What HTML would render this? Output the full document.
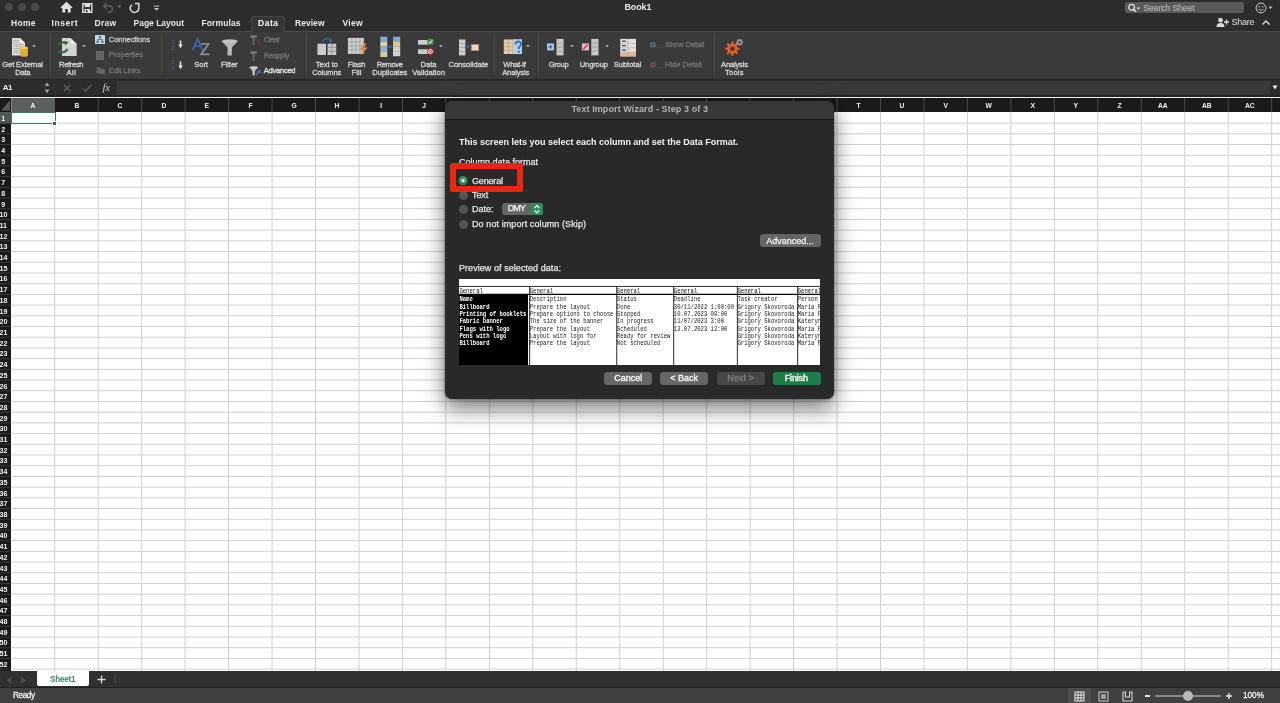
<!DOCTYPE html>
<html><head><meta charset="utf-8"><title>Book1</title>
<style>
html,body{margin:0;padding:0;background:#fff;}
body{width:1280px;height:703px;position:relative;overflow:hidden;font-family:"Liberation Sans",sans-serif;}
#root{position:absolute;left:0;top:0;width:1280px;height:703px;will-change:transform;}
.r{position:absolute;display:block;}
.t{position:absolute;white-space:pre;font-family:"Liberation Sans",sans-serif;}
.m{font-family:"Liberation Mono",monospace;}
</style></head><body><div id="root">
<div class="r" style="left:0px;top:0px;width:1280px;height:31px;background:#2c2c2c;"></div>
<div class="r" style="left:0px;top:31px;width:1280px;height:48px;background:#3a3a3a;"></div>
<div class="r" style="left:0px;top:31px;width:1280px;height:1px;background:#4a4a4a;"></div>
<div class="r" style="left:251px;top:16.2px;width:34px;height:15.8px;background:#363636;border-radius:3px 3px 0 0;border:1px solid #464646;border-bottom:none;box-sizing:border-box;"></div>
<div class="r" style="left:0px;top:79px;width:1280px;height:18px;background:#2c2c2c;"></div>
<div class="r" style="left:0px;top:78.5px;width:1280px;height:1.5px;background:#252525;"></div>
<div class="r" style="left:0px;top:95px;width:1280px;height:2px;background:#242424;"></div>
<div class="r" style="left:117px;top:80.5px;width:1153.4px;height:14.3px;background:#393939;"></div>
<div class="r" style="left:0px;top:96.8px;width:1280px;height:1.3px;background:#f0f0f0;"></div>
<div class="r" style="left:0px;top:98px;width:1280px;height:14px;background:#1a1a1a;"></div>
<div class="r" style="left:0px;top:112px;width:1280px;height:559px;background:#ffffff;"></div>
<div class="r" style="left:0px;top:671px;width:1280px;height:17px;background:#303030;"></div>
<div class="r" style="left:0px;top:688.3px;width:1280px;height:15px;background:#404040;"></div>
<div class="r" style="left:0px;top:686.6px;width:1280px;height:1.7px;background:#202020;"></div>
<div class="r" style="left:4.6px;top:3.0px;width:8.2px;height:8.2px;background:#494949;border-radius:50%"></div>
<div class="r" style="left:18.1px;top:3.0px;width:8.2px;height:8.2px;background:#494949;border-radius:50%"></div>
<div class="r" style="left:31.299999999999997px;top:3.0px;width:8.2px;height:8.2px;background:#494949;border-radius:50%"></div>
<div class="t" style="left:624.50px;top:2.00px;font-size:9px;line-height:11px;font-weight:700;color:#e8e8e8;letter-spacing:-0.127px;">Book1</div>
<svg class="r" style="left:60px;top:1px" width="13" height="13" viewBox="0 0 13 13"><path d="M6.5 1.4 L12 6.6 H10.6 V11.6 H7.8 V8 H5.2 V11.6 H2.4 V6.6 H1Z" fill="#e4e4e4"/><path d="M0.9 6.9 L6.5 1.6 L12.1 6.9" fill="none" stroke="#e4e4e4" stroke-width="1.3"/></svg>
<svg class="r" style="left:82px;top:2.5px" width="11" height="10" viewBox="0 0 11 10"><path d="M0.8 0.8 H9.8 V9.2 H0.8Z" fill="none" stroke="#dedede" stroke-width="1.4"/><rect x="2.6" y="0.8" width="5.4" height="3.3" fill="#dedede"/><rect x="2.6" y="6" width="5.4" height="3.2" fill="#dedede"/><rect x="4" y="7" width="1.4" height="2.2" fill="#2c2c2c"/></svg>
<svg class="r" style="left:102px;top:1px" width="12" height="12" viewBox="0 0 12 12"><path d="M4.5 2 L1.5 5 L4.5 8 M1.5 5 H7.5 A3 3 0 0 1 7.5 11 H5.5" fill="none" stroke="#5e5e5e" stroke-width="1.3"/></svg>
<svg class="r" style="left:117.3px;top:5.3px" width="5" height="3.5" viewBox="0 0 5 3.5"><path d="M0.4 0.4 H4.6 L2.5 3Z" fill="#6e6e6e"/></svg>
<svg class="r" style="left:129px;top:1px" width="13" height="13" viewBox="0 0 13 13"><path d="M2.9 3.9 A4.2 4.2 0 1 0 9.64 6.47" fill="none" stroke="#dadada" stroke-width="1.5"/><path d="M5.9 2.4 H9.8 V6.6" fill="none" stroke="#dadada" stroke-width="1.5"/></svg>
<svg class="r" style="left:152.5px;top:4.5px" width="7" height="7" viewBox="0 0 7 7"><rect x="0.8" y="0.6" width="5.4" height="1.1" fill="#b8b8b8"/><path d="M0.8 3 H6.2 L3.5 6Z" fill="#b8b8b8"/></svg>
<div class="r" style="left:1125px;top:1.6px;width:119px;height:11.8px;background:#595959;border-radius:2px"></div>
<svg class="r" style="left:1127px;top:2.6px" width="14" height="10" viewBox="0 0 14 10"><circle cx="4.6" cy="4.3" r="2.9" fill="none" stroke="#e0e0e0" stroke-width="1.3"/><path d="M6.7 6.4 L9 8.8" stroke="#e0e0e0" stroke-width="1.5"/><path d="M9.5 4.5 H13 L11.2 6.7Z" fill="#e0e0e0"/></svg>
<div class="t" style="left:1143.50px;top:2.95px;font-size:8.5px;line-height:10.5px;font-weight:400;color:#ababab;letter-spacing:-0.046px;-webkit-text-stroke:0.25px currentColor;">Search Sheet</div>
<svg class="r" style="left:1255px;top:2px" width="12" height="12" viewBox="0 0 12 12"><circle cx="6" cy="6" r="4.9" fill="none" stroke="#cfcfcf" stroke-width="1"/><circle cx="4.3" cy="4.7" r="0.7" fill="#cfcfcf"/><circle cx="7.7" cy="4.7" r="0.7" fill="#cfcfcf"/><path d="M3.6 7.2 Q6 9.6 8.4 7.2" fill="none" stroke="#cfcfcf" stroke-width="0.9"/></svg>
<svg class="r" style="left:1268px;top:6px" width="6" height="4" viewBox="0 0 6 4"><path d="M0.5 0.5 H4.5 L2.5 3Z" fill="#bbb"/></svg>
<svg class="r" style="left:1216px;top:17px" width="14" height="11" viewBox="0 0 14 11"><circle cx="4.5" cy="3.2" r="2.4" fill="#d8d8d8"/><path d="M0.5 10 Q0.5 6 4.5 6 Q8.5 6 8.5 10Z" fill="#d8d8d8"/><path d="M10.5 2.5 V7.5 M8 5 H13" stroke="#d8d8d8" stroke-width="1.3"/></svg>
<div class="t" style="left:1231.50px;top:16.50px;font-size:9px;line-height:11px;font-weight:400;color:#e0e0e0;letter-spacing:-0.254px;">Share</div>
<svg class="r" style="left:1261px;top:19px" width="10" height="7" viewBox="0 0 10 7"><path d="M1.5 5.5 L5 2 L8.5 5.5" fill="none" stroke="#d0d0d0" stroke-width="1.5"/></svg>
<div class="t" style="left:11.00px;top:18.05px;font-size:8.5px;line-height:10.5px;font-weight:700;color:#e8e8e8;letter-spacing:0.295px;">Home</div>
<div class="t" style="left:51.50px;top:18.05px;font-size:8.5px;line-height:10.5px;font-weight:700;color:#e8e8e8;letter-spacing:0.571px;">Insert</div>
<div class="t" style="left:94.50px;top:18.05px;font-size:8.5px;line-height:10.5px;font-weight:700;color:#e8e8e8;letter-spacing:0.238px;">Draw</div>
<div class="t" style="left:133.50px;top:18.05px;font-size:8.5px;line-height:10.5px;font-weight:700;color:#e8e8e8;letter-spacing:-0.004px;">Page Layout</div>
<div class="t" style="left:201.50px;top:18.05px;font-size:8.5px;line-height:10.5px;font-weight:700;color:#e8e8e8;letter-spacing:0.106px;">Formulas</div>
<div class="t" style="left:258.00px;top:18.05px;font-size:8.5px;line-height:10.5px;font-weight:700;color:#ffffff;letter-spacing:0.525px;">Data</div>
<div class="t" style="left:295.00px;top:18.05px;font-size:8.5px;line-height:10.5px;font-weight:700;color:#e8e8e8;letter-spacing:0.041px;">Review</div>
<div class="t" style="left:342.50px;top:18.05px;font-size:8.5px;line-height:10.5px;font-weight:700;color:#e8e8e8;letter-spacing:0.261px;">View</div>
<div class="r" style="left:50px;top:35px;width:1px;height:40px;background:#4d4d4d;"></div>
<div class="r" style="left:161px;top:35px;width:1px;height:40px;background:#4d4d4d;"></div>
<div class="r" style="left:305.5px;top:35px;width:1px;height:40px;background:#4d4d4d;"></div>
<div class="r" style="left:494px;top:35px;width:1px;height:40px;background:#4d4d4d;"></div>
<div class="r" style="left:537.5px;top:35px;width:1px;height:40px;background:#4d4d4d;"></div>
<div class="r" style="left:714px;top:35px;width:1px;height:40px;background:#4d4d4d;"></div>
<div class="t" style="left:2.30px;top:59.50px;font-size:7.6px;line-height:9.6px;font-weight:400;color:#d4d4d4;letter-spacing:-0.140px;-webkit-text-stroke:0.3px currentColor;">Get External</div>
<div class="t" style="left:15.20px;top:67.60px;font-size:7.6px;line-height:9.6px;font-weight:400;color:#d4d4d4;letter-spacing:-0.218px;-webkit-text-stroke:0.3px currentColor;">Data</div>
<div class="t" style="left:59.00px;top:59.50px;font-size:7.6px;line-height:9.6px;font-weight:400;color:#d4d4d4;letter-spacing:-0.335px;-webkit-text-stroke:0.3px currentColor;">Refresh</div>
<div class="t" style="left:66.50px;top:67.60px;font-size:7.6px;line-height:9.6px;font-weight:400;color:#d4d4d4;letter-spacing:0.527px;-webkit-text-stroke:0.3px currentColor;">All</div>
<div class="t" style="left:194.30px;top:59.50px;font-size:7.6px;line-height:9.6px;font-weight:400;color:#d4d4d4;letter-spacing:-0.080px;-webkit-text-stroke:0.3px currentColor;">Sort</div>
<div class="t" style="left:221.00px;top:59.50px;font-size:7.6px;line-height:9.6px;font-weight:400;color:#d4d4d4;letter-spacing:-0.058px;-webkit-text-stroke:0.3px currentColor;">Filter</div>
<div class="t" style="left:315.80px;top:59.50px;font-size:7.6px;line-height:9.6px;font-weight:400;color:#d4d4d4;letter-spacing:-0.031px;-webkit-text-stroke:0.3px currentColor;">Text to</div>
<div class="t" style="left:312.20px;top:67.60px;font-size:7.6px;line-height:9.6px;font-weight:400;color:#d4d4d4;letter-spacing:-0.148px;-webkit-text-stroke:0.3px currentColor;">Columns</div>
<div class="t" style="left:347.80px;top:59.50px;font-size:7.6px;line-height:9.6px;font-weight:400;color:#d4d4d4;letter-spacing:-0.196px;-webkit-text-stroke:0.3px currentColor;">Flash</div>
<div class="t" style="left:351.50px;top:67.60px;font-size:7.6px;line-height:9.6px;font-weight:400;color:#d4d4d4;letter-spacing:0.097px;-webkit-text-stroke:0.3px currentColor;">Fill</div>
<div class="t" style="left:376.70px;top:59.50px;font-size:7.6px;line-height:9.6px;font-weight:400;color:#d4d4d4;letter-spacing:-0.400px;-webkit-text-stroke:0.3px currentColor;">Remove</div>
<div class="t" style="left:372.30px;top:67.60px;font-size:7.6px;line-height:9.6px;font-weight:400;color:#d4d4d4;letter-spacing:-0.043px;-webkit-text-stroke:0.3px currentColor;">Duplicates</div>
<div class="t" style="left:420.50px;top:59.50px;font-size:7.6px;line-height:9.6px;font-weight:400;color:#d4d4d4;letter-spacing:-0.018px;-webkit-text-stroke:0.3px currentColor;">Data</div>
<div class="t" style="left:412.30px;top:67.60px;font-size:7.6px;line-height:9.6px;font-weight:400;color:#d4d4d4;letter-spacing:-0.013px;-webkit-text-stroke:0.3px currentColor;">Validation</div>
<div class="t" style="left:448.50px;top:59.50px;font-size:7.6px;line-height:9.6px;font-weight:400;color:#d4d4d4;letter-spacing:-0.044px;-webkit-text-stroke:0.3px currentColor;">Consolidate</div>
<div class="t" style="left:503.30px;top:59.50px;font-size:7.6px;line-height:9.6px;font-weight:400;color:#d4d4d4;letter-spacing:-0.299px;-webkit-text-stroke:0.3px currentColor;">What-If</div>
<div class="t" style="left:502.20px;top:67.60px;font-size:7.6px;line-height:9.6px;font-weight:400;color:#d4d4d4;letter-spacing:-0.172px;-webkit-text-stroke:0.3px currentColor;">Analysis</div>
<div class="t" style="left:548.70px;top:59.50px;font-size:7.6px;line-height:9.6px;font-weight:400;color:#d4d4d4;letter-spacing:-0.281px;-webkit-text-stroke:0.3px currentColor;">Group</div>
<div class="t" style="left:579.80px;top:59.50px;font-size:7.6px;line-height:9.6px;font-weight:400;color:#d4d4d4;letter-spacing:-0.159px;-webkit-text-stroke:0.3px currentColor;">Ungroup</div>
<div class="t" style="left:613.70px;top:59.50px;font-size:7.6px;line-height:9.6px;font-weight:400;color:#d4d4d4;letter-spacing:-0.041px;-webkit-text-stroke:0.3px currentColor;">Subtotal</div>
<div class="t" style="left:721.00px;top:59.50px;font-size:7.6px;line-height:9.6px;font-weight:400;color:#d4d4d4;letter-spacing:-0.186px;-webkit-text-stroke:0.3px currentColor;">Analysis</div>
<div class="t" style="left:725.00px;top:67.60px;font-size:7.6px;line-height:9.6px;font-weight:400;color:#d4d4d4;letter-spacing:0.189px;-webkit-text-stroke:0.3px currentColor;">Tools</div>
<div class="t" style="left:108.80px;top:34.80px;font-size:7.6px;line-height:9.6px;font-weight:400;color:#c9c9c9;letter-spacing:-0.105px;-webkit-text-stroke:0.3px currentColor;">Connections</div>
<div class="t" style="left:108.80px;top:50.40px;font-size:7.6px;line-height:9.6px;font-weight:400;color:#737373;letter-spacing:-0.049px;-webkit-text-stroke:0.3px currentColor;">Properties</div>
<div class="t" style="left:108.80px;top:65.60px;font-size:7.6px;line-height:9.6px;font-weight:400;color:#737373;letter-spacing:-0.139px;-webkit-text-stroke:0.3px currentColor;">Edit Links</div>
<div class="t" style="left:263.80px;top:35.00px;font-size:7.6px;line-height:9.6px;font-weight:400;color:#737373;letter-spacing:-0.491px;-webkit-text-stroke:0.3px currentColor;">Clear</div>
<div class="t" style="left:263.80px;top:50.50px;font-size:7.6px;line-height:9.6px;font-weight:400;color:#737373;letter-spacing:-0.397px;-webkit-text-stroke:0.3px currentColor;">Reapply</div>
<div class="t" style="left:263.80px;top:65.70px;font-size:7.6px;line-height:9.6px;font-weight:400;color:#e4e4e4;letter-spacing:-0.286px;-webkit-text-stroke:0.3px currentColor;">Advanced</div>
<div class="t" style="left:665.00px;top:40.40px;font-size:7.6px;line-height:9.6px;font-weight:400;color:#737373;letter-spacing:-0.115px;-webkit-text-stroke:0.3px currentColor;">Show Detail</div>
<div class="t" style="left:665.00px;top:60.20px;font-size:7.6px;line-height:9.6px;font-weight:400;color:#737373;letter-spacing:-0.037px;-webkit-text-stroke:0.3px currentColor;">Hide Detail</div>
<svg class="r" style="left:32px;top:44.900000000000006px" width="4" height="2.6" viewBox="0 0 4 2.6"><path d="M0.2 0.2 H3.8 L2 2.4Z" fill="#c0c0c0"/></svg>
<svg class="r" style="left:82px;top:44.900000000000006px" width="4" height="2.6" viewBox="0 0 4 2.6"><path d="M0.2 0.2 H3.8 L2 2.4Z" fill="#c0c0c0"/></svg>
<svg class="r" style="left:439.4px;top:44.900000000000006px" width="4" height="2.6" viewBox="0 0 4 2.6"><path d="M0.2 0.2 H3.8 L2 2.4Z" fill="#c0c0c0"/></svg>
<svg class="r" style="left:525.9px;top:44.900000000000006px" width="4" height="2.6" viewBox="0 0 4 2.6"><path d="M0.2 0.2 H3.8 L2 2.4Z" fill="#c0c0c0"/></svg>
<svg class="r" style="left:569.6px;top:44.900000000000006px" width="4" height="2.6" viewBox="0 0 4 2.6"><path d="M0.2 0.2 H3.8 L2 2.4Z" fill="#c0c0c0"/></svg>
<svg class="r" style="left:604.6px;top:44.900000000000006px" width="4" height="2.6" viewBox="0 0 4 2.6"><path d="M0.2 0.2 H3.8 L2 2.4Z" fill="#c0c0c0"/></svg>
<div class="t" style="left:2.80px;top:83.00px;font-size:8px;line-height:10px;font-weight:700;color:#f0f0f0;letter-spacing:-0.627px;">A1</div>
<svg class="r" style="left:44px;top:81px" width="6" height="14" viewBox="0 0 6 14"><path d="M0.6 5 L3 1.2 L5.4 5Z M0.6 8.6 L3 12.4 L5.4 8.6Z" fill="#9c9c9c"/></svg>
<div class="r" style="left:54px;top:80px;width:1px;height:16px;background:#363636;"></div>
<svg class="r" style="left:63px;top:84.3px" width="8" height="8" viewBox="0 0 8 8"><path d="M1 1 L7 7 M7 1 L1 7" stroke="#585858" stroke-width="1.7" fill="none"/></svg>
<svg class="r" style="left:81.5px;top:84.3px" width="10" height="8" viewBox="0 0 10 8"><path d="M1 4.5 L3.8 7 L9 1" stroke="#585858" stroke-width="1.6" fill="none"/></svg>
<div class="t" style="left:102.5px;top:81px;font-family:'Liberation Serif',serif;font-style:italic;font-size:11px;line-height:13px;color:#c4c4c4;letter-spacing:-0.3px">fx</div>
<svg class="r" style="left:1272px;top:85.3px" width="6" height="5" viewBox="0 0 6 5"><path d="M0.4 0.5 H5.6 L3 4.6Z" fill="#e8e8e8"/></svg>
<div class="r" style="left:11px;top:98px;width:44px;height:14px;background:#5b605d;"></div>
<svg class="r" style="left:0px;top:98px" width="11" height="14" viewBox="0 0 11 14"><path d="M10 2.5 V12.5 H1Z" fill="#5a5a5a"/></svg>
<div class="r" style="left:11px;top:98px;width:1px;height:14px;background:#8c8c8c;"></div>
<svg class="r" style="left:0px;top:0px" width="1280" height="120" viewBox="0 0 1280 120"><path d="M98.22 98V112M141.68 98V112M185.14 98V112M228.60 98V112M272.06 98V112M315.52 98V112M358.98 98V112M402.44 98V112M445.90 98V112M489.36 98V112M532.82 98V112M576.28 98V112M619.74 98V112M663.20 98V112M706.66 98V112M750.12 98V112M793.58 98V112M837.04 98V112M880.50 98V112M923.96 98V112M967.42 98V112M1010.88 98V112M1054.34 98V112M1097.80 98V112M1141.26 98V112M1184.72 98V112M1228.18 98V112M1271.64 98V112" stroke="#4a4a4a" stroke-width="1" fill="none"/></svg>
<div class="t" style="left:30.14px;top:100.90px;font-size:8px;line-height:10px;font-weight:700;color:#f4f4f4;letter-spacing:0.000px;transform:scaleX(0.84);transform-origin:50% 50%;">A</div>
<div class="t" style="left:73.60px;top:100.90px;font-size:8px;line-height:10px;font-weight:700;color:#f4f4f4;letter-spacing:0.000px;transform:scaleX(0.84);transform-origin:50% 50%;">B</div>
<div class="t" style="left:117.06px;top:100.90px;font-size:8px;line-height:10px;font-weight:700;color:#f4f4f4;letter-spacing:0.000px;transform:scaleX(0.84);transform-origin:50% 50%;">C</div>
<div class="t" style="left:160.52px;top:100.90px;font-size:8px;line-height:10px;font-weight:700;color:#f4f4f4;letter-spacing:-0.000px;transform:scaleX(0.84);transform-origin:50% 50%;">D</div>
<div class="t" style="left:204.20px;top:100.90px;font-size:8px;line-height:10px;font-weight:700;color:#f4f4f4;letter-spacing:0.000px;transform:scaleX(0.84);transform-origin:50% 50%;">E</div>
<div class="t" style="left:247.89px;top:100.90px;font-size:8px;line-height:10px;font-weight:700;color:#f4f4f4;letter-spacing:-0.000px;transform:scaleX(0.84);transform-origin:50% 50%;">F</div>
<div class="t" style="left:290.68px;top:100.90px;font-size:8px;line-height:10px;font-weight:700;color:#f4f4f4;letter-spacing:-0.000px;transform:scaleX(0.84);transform-origin:50% 50%;">G</div>
<div class="t" style="left:334.36px;top:100.90px;font-size:8px;line-height:10px;font-weight:700;color:#f4f4f4;letter-spacing:0.000px;transform:scaleX(0.84);transform-origin:50% 50%;">H</div>
<div class="t" style="left:379.60px;top:100.90px;font-size:8px;line-height:10px;font-weight:700;color:#f4f4f4;letter-spacing:-0.000px;transform:scaleX(0.84);transform-origin:50% 50%;">I</div>
<div class="t" style="left:421.95px;top:100.90px;font-size:8px;line-height:10px;font-weight:700;color:#f4f4f4;letter-spacing:0.000px;transform:scaleX(0.84);transform-origin:50% 50%;">J</div>
<div class="t" style="left:464.74px;top:100.90px;font-size:8px;line-height:10px;font-weight:700;color:#f4f4f4;letter-spacing:0.000px;transform:scaleX(0.84);transform-origin:50% 50%;">K</div>
<div class="t" style="left:508.65px;top:100.90px;font-size:8px;line-height:10px;font-weight:700;color:#f4f4f4;letter-spacing:-0.000px;transform:scaleX(0.84);transform-origin:50% 50%;">L</div>
<div class="t" style="left:551.22px;top:100.90px;font-size:8px;line-height:10px;font-weight:700;color:#f4f4f4;letter-spacing:0.000px;transform:scaleX(0.84);transform-origin:50% 50%;">M</div>
<div class="t" style="left:595.12px;top:100.90px;font-size:8px;line-height:10px;font-weight:700;color:#f4f4f4;letter-spacing:-0.000px;transform:scaleX(0.84);transform-origin:50% 50%;">N</div>
<div class="t" style="left:638.36px;top:100.90px;font-size:8px;line-height:10px;font-weight:700;color:#f4f4f4;letter-spacing:0.000px;transform:scaleX(0.84);transform-origin:50% 50%;">O</div>
<div class="t" style="left:682.26px;top:100.90px;font-size:8px;line-height:10px;font-weight:700;color:#f4f4f4;letter-spacing:0.000px;transform:scaleX(0.84);transform-origin:50% 50%;">P</div>
<div class="t" style="left:725.28px;top:100.90px;font-size:8px;line-height:10px;font-weight:700;color:#f4f4f4;letter-spacing:0.000px;transform:scaleX(0.84);transform-origin:50% 50%;">Q</div>
<div class="t" style="left:768.96px;top:100.90px;font-size:8px;line-height:10px;font-weight:700;color:#f4f4f4;letter-spacing:-0.000px;transform:scaleX(0.84);transform-origin:50% 50%;">R</div>
<div class="t" style="left:812.64px;top:100.90px;font-size:8px;line-height:10px;font-weight:700;color:#f4f4f4;letter-spacing:0.000px;transform:scaleX(0.84);transform-origin:50% 50%;">S</div>
<div class="t" style="left:856.33px;top:100.90px;font-size:8px;line-height:10px;font-weight:700;color:#f4f4f4;letter-spacing:-0.000px;transform:scaleX(0.84);transform-origin:50% 50%;">T</div>
<div class="t" style="left:899.34px;top:100.90px;font-size:8px;line-height:10px;font-weight:700;color:#f4f4f4;letter-spacing:-0.000px;transform:scaleX(0.84);transform-origin:50% 50%;">U</div>
<div class="t" style="left:943.02px;top:100.90px;font-size:8px;line-height:10px;font-weight:700;color:#f4f4f4;letter-spacing:0.000px;transform:scaleX(0.84);transform-origin:50% 50%;">V</div>
<div class="t" style="left:985.37px;top:100.90px;font-size:8px;line-height:10px;font-weight:700;color:#f4f4f4;letter-spacing:0.000px;transform:scaleX(0.84);transform-origin:50% 50%;">W</div>
<div class="t" style="left:1029.94px;top:100.90px;font-size:8px;line-height:10px;font-weight:700;color:#f4f4f4;letter-spacing:-0.000px;transform:scaleX(0.84);transform-origin:50% 50%;">X</div>
<div class="t" style="left:1073.40px;top:100.90px;font-size:8px;line-height:10px;font-weight:700;color:#f4f4f4;letter-spacing:-0.000px;transform:scaleX(0.84);transform-origin:50% 50%;">Y</div>
<div class="t" style="left:1117.09px;top:100.90px;font-size:8px;line-height:10px;font-weight:700;color:#f4f4f4;letter-spacing:0.000px;transform:scaleX(0.84);transform-origin:50% 50%;">Z</div>
<div class="t" style="left:1157.21px;top:100.90px;font-size:8px;line-height:10px;font-weight:700;color:#f4f4f4;letter-spacing:-0.000px;transform:scaleX(0.84);transform-origin:50% 50%;">AA</div>
<div class="t" style="left:1200.67px;top:100.90px;font-size:8px;line-height:10px;font-weight:700;color:#f4f4f4;letter-spacing:-0.000px;transform:scaleX(0.84);transform-origin:50% 50%;">AB</div>
<div class="t" style="left:1244.13px;top:100.90px;font-size:8px;line-height:10px;font-weight:700;color:#f4f4f4;letter-spacing:-0.000px;transform:scaleX(0.84);transform-origin:50% 50%;">AC</div>
<svg class="r" style="left:0px;top:0px" width="1280" height="671" viewBox="0 0 1280 671"><path d="M11 123.11H1280M11 133.81H1280M11 144.52H1280M11 155.22H1280M11 165.93H1280M11 176.64H1280M11 187.34H1280M11 198.05H1280M11 208.75H1280M11 219.46H1280M11 230.17H1280M11 240.87H1280M11 251.58H1280M11 262.28H1280M11 272.99H1280M11 283.70H1280M11 294.40H1280M11 305.11H1280M11 315.81H1280M11 326.52H1280M11 337.23H1280M11 347.93H1280M11 358.64H1280M11 369.34H1280M11 380.05H1280M11 390.76H1280M11 401.46H1280M11 412.17H1280M11 422.87H1280M11 433.58H1280M11 444.29H1280M11 454.99H1280M11 465.70H1280M11 476.40H1280M11 487.11H1280M11 497.82H1280M11 508.52H1280M11 519.23H1280M11 529.93H1280M11 540.64H1280M11 551.35H1280M11 562.05H1280M11 572.76H1280M11 583.46H1280M11 594.17H1280M11 604.88H1280M11 615.58H1280M11 626.29H1280M11 636.99H1280M11 647.70H1280M11 658.41H1280M11 669.11H1280M54.76 112V671M98.22 112V671M141.68 112V671M185.14 112V671M228.60 112V671M272.06 112V671M315.52 112V671M358.98 112V671M402.44 112V671M445.90 112V671M489.36 112V671M532.82 112V671M576.28 112V671M619.74 112V671M663.20 112V671M706.66 112V671M750.12 112V671M793.58 112V671M837.04 112V671M880.50 112V671M923.96 112V671M967.42 112V671M1010.88 112V671M1054.34 112V671M1097.80 112V671M1141.26 112V671M1184.72 112V671M1228.18 112V671M1271.64 112V671" stroke="#d1d1d1" stroke-width="1" fill="none"/></svg>
<div class="r" style="left:0px;top:112px;width:11px;height:559px;background:#1a1a1a;"></div>
<div class="r" style="left:0px;top:112px;width:11px;height:11.5px;background:#505a55;"></div>
<svg class="r" style="left:0px;top:0px" width="12" height="671" viewBox="0 0 12 671"><path d="M0 123.11H11M0 133.81H11M0 144.52H11M0 155.22H11M0 165.93H11M0 176.64H11M0 187.34H11M0 198.05H11M0 208.75H11M0 219.46H11M0 230.17H11M0 240.87H11M0 251.58H11M0 262.28H11M0 272.99H11M0 283.70H11M0 294.40H11M0 305.11H11M0 315.81H11M0 326.52H11M0 337.23H11M0 347.93H11M0 358.64H11M0 369.34H11M0 380.05H11M0 390.76H11M0 401.46H11M0 412.17H11M0 422.87H11M0 433.58H11M0 444.29H11M0 454.99H11M0 465.70H11M0 476.40H11M0 487.11H11M0 497.82H11M0 508.52H11M0 519.23H11M0 529.93H11M0 540.64H11M0 551.35H11M0 562.05H11M0 572.76H11M0 583.46H11M0 594.17H11M0 604.88H11M0 615.58H11M0 626.29H11M0 636.99H11M0 647.70H11M0 658.41H11M0 669.11H11" stroke="#3a3a3a" stroke-width="1" fill="none"/></svg>
<div class="r" style="left:0;top:112px;width:11px;height:559px;overflow:hidden">
<div class="t" style="left:1.30px;top:1.85px;font-size:7.9px;line-height:9px;font-weight:700;color:#f4f4f4;transform:scaleX(0.9);transform-origin:50% 50%">1</div>
<div class="t" style="left:1.30px;top:12.56px;font-size:7.9px;line-height:9px;font-weight:700;color:#f4f4f4;transform:scaleX(0.9);transform-origin:50% 50%">2</div>
<div class="t" style="left:1.30px;top:23.27px;font-size:7.9px;line-height:9px;font-weight:700;color:#f4f4f4;transform:scaleX(0.9);transform-origin:50% 50%">3</div>
<div class="t" style="left:1.30px;top:33.97px;font-size:7.9px;line-height:9px;font-weight:700;color:#f4f4f4;transform:scaleX(0.9);transform-origin:50% 50%">4</div>
<div class="t" style="left:1.30px;top:44.68px;font-size:7.9px;line-height:9px;font-weight:700;color:#f4f4f4;transform:scaleX(0.9);transform-origin:50% 50%">5</div>
<div class="t" style="left:1.30px;top:55.38px;font-size:7.9px;line-height:9px;font-weight:700;color:#f4f4f4;transform:scaleX(0.9);transform-origin:50% 50%">6</div>
<div class="t" style="left:1.30px;top:66.09px;font-size:7.9px;line-height:9px;font-weight:700;color:#f4f4f4;transform:scaleX(0.9);transform-origin:50% 50%">7</div>
<div class="t" style="left:1.30px;top:76.79px;font-size:7.9px;line-height:9px;font-weight:700;color:#f4f4f4;transform:scaleX(0.9);transform-origin:50% 50%">8</div>
<div class="t" style="left:1.30px;top:87.50px;font-size:7.9px;line-height:9px;font-weight:700;color:#f4f4f4;transform:scaleX(0.9);transform-origin:50% 50%">9</div>
<div class="t" style="left:-0.89px;top:98.21px;font-size:7.9px;line-height:9px;font-weight:700;color:#f4f4f4;transform:scaleX(0.9);transform-origin:50% 50%">10</div>
<div class="t" style="left:-0.68px;top:108.91px;font-size:7.9px;line-height:9px;font-weight:700;color:#f4f4f4;transform:scaleX(0.9);transform-origin:50% 50%">11</div>
<div class="t" style="left:-0.89px;top:119.62px;font-size:7.9px;line-height:9px;font-weight:700;color:#f4f4f4;transform:scaleX(0.9);transform-origin:50% 50%">12</div>
<div class="t" style="left:-0.89px;top:130.32px;font-size:7.9px;line-height:9px;font-weight:700;color:#f4f4f4;transform:scaleX(0.9);transform-origin:50% 50%">13</div>
<div class="t" style="left:-0.89px;top:141.03px;font-size:7.9px;line-height:9px;font-weight:700;color:#f4f4f4;transform:scaleX(0.9);transform-origin:50% 50%">14</div>
<div class="t" style="left:-0.89px;top:151.74px;font-size:7.9px;line-height:9px;font-weight:700;color:#f4f4f4;transform:scaleX(0.9);transform-origin:50% 50%">15</div>
<div class="t" style="left:-0.89px;top:162.44px;font-size:7.9px;line-height:9px;font-weight:700;color:#f4f4f4;transform:scaleX(0.9);transform-origin:50% 50%">16</div>
<div class="t" style="left:-0.89px;top:173.15px;font-size:7.9px;line-height:9px;font-weight:700;color:#f4f4f4;transform:scaleX(0.9);transform-origin:50% 50%">17</div>
<div class="t" style="left:-0.89px;top:183.85px;font-size:7.9px;line-height:9px;font-weight:700;color:#f4f4f4;transform:scaleX(0.9);transform-origin:50% 50%">18</div>
<div class="t" style="left:-0.89px;top:194.56px;font-size:7.9px;line-height:9px;font-weight:700;color:#f4f4f4;transform:scaleX(0.9);transform-origin:50% 50%">19</div>
<div class="t" style="left:-0.89px;top:205.27px;font-size:7.9px;line-height:9px;font-weight:700;color:#f4f4f4;transform:scaleX(0.9);transform-origin:50% 50%">20</div>
<div class="t" style="left:-0.89px;top:215.97px;font-size:7.9px;line-height:9px;font-weight:700;color:#f4f4f4;transform:scaleX(0.9);transform-origin:50% 50%">21</div>
<div class="t" style="left:-0.89px;top:226.68px;font-size:7.9px;line-height:9px;font-weight:700;color:#f4f4f4;transform:scaleX(0.9);transform-origin:50% 50%">22</div>
<div class="t" style="left:-0.89px;top:237.38px;font-size:7.9px;line-height:9px;font-weight:700;color:#f4f4f4;transform:scaleX(0.9);transform-origin:50% 50%">23</div>
<div class="t" style="left:-0.89px;top:248.09px;font-size:7.9px;line-height:9px;font-weight:700;color:#f4f4f4;transform:scaleX(0.9);transform-origin:50% 50%">24</div>
<div class="t" style="left:-0.89px;top:258.80px;font-size:7.9px;line-height:9px;font-weight:700;color:#f4f4f4;transform:scaleX(0.9);transform-origin:50% 50%">25</div>
<div class="t" style="left:-0.89px;top:269.50px;font-size:7.9px;line-height:9px;font-weight:700;color:#f4f4f4;transform:scaleX(0.9);transform-origin:50% 50%">26</div>
<div class="t" style="left:-0.89px;top:280.21px;font-size:7.9px;line-height:9px;font-weight:700;color:#f4f4f4;transform:scaleX(0.9);transform-origin:50% 50%">27</div>
<div class="t" style="left:-0.89px;top:290.91px;font-size:7.9px;line-height:9px;font-weight:700;color:#f4f4f4;transform:scaleX(0.9);transform-origin:50% 50%">28</div>
<div class="t" style="left:-0.89px;top:301.62px;font-size:7.9px;line-height:9px;font-weight:700;color:#f4f4f4;transform:scaleX(0.9);transform-origin:50% 50%">29</div>
<div class="t" style="left:-0.89px;top:312.33px;font-size:7.9px;line-height:9px;font-weight:700;color:#f4f4f4;transform:scaleX(0.9);transform-origin:50% 50%">30</div>
<div class="t" style="left:-0.89px;top:323.03px;font-size:7.9px;line-height:9px;font-weight:700;color:#f4f4f4;transform:scaleX(0.9);transform-origin:50% 50%">31</div>
<div class="t" style="left:-0.89px;top:333.74px;font-size:7.9px;line-height:9px;font-weight:700;color:#f4f4f4;transform:scaleX(0.9);transform-origin:50% 50%">32</div>
<div class="t" style="left:-0.89px;top:344.45px;font-size:7.9px;line-height:9px;font-weight:700;color:#f4f4f4;transform:scaleX(0.9);transform-origin:50% 50%">33</div>
<div class="t" style="left:-0.89px;top:355.15px;font-size:7.9px;line-height:9px;font-weight:700;color:#f4f4f4;transform:scaleX(0.9);transform-origin:50% 50%">34</div>
<div class="t" style="left:-0.89px;top:365.86px;font-size:7.9px;line-height:9px;font-weight:700;color:#f4f4f4;transform:scaleX(0.9);transform-origin:50% 50%">35</div>
<div class="t" style="left:-0.89px;top:376.56px;font-size:7.9px;line-height:9px;font-weight:700;color:#f4f4f4;transform:scaleX(0.9);transform-origin:50% 50%">36</div>
<div class="t" style="left:-0.89px;top:387.27px;font-size:7.9px;line-height:9px;font-weight:700;color:#f4f4f4;transform:scaleX(0.9);transform-origin:50% 50%">37</div>
<div class="t" style="left:-0.89px;top:397.98px;font-size:7.9px;line-height:9px;font-weight:700;color:#f4f4f4;transform:scaleX(0.9);transform-origin:50% 50%">38</div>
<div class="t" style="left:-0.89px;top:408.68px;font-size:7.9px;line-height:9px;font-weight:700;color:#f4f4f4;transform:scaleX(0.9);transform-origin:50% 50%">39</div>
<div class="t" style="left:-0.89px;top:419.39px;font-size:7.9px;line-height:9px;font-weight:700;color:#f4f4f4;transform:scaleX(0.9);transform-origin:50% 50%">40</div>
<div class="t" style="left:-0.89px;top:430.09px;font-size:7.9px;line-height:9px;font-weight:700;color:#f4f4f4;transform:scaleX(0.9);transform-origin:50% 50%">41</div>
<div class="t" style="left:-0.89px;top:440.80px;font-size:7.9px;line-height:9px;font-weight:700;color:#f4f4f4;transform:scaleX(0.9);transform-origin:50% 50%">42</div>
<div class="t" style="left:-0.89px;top:451.50px;font-size:7.9px;line-height:9px;font-weight:700;color:#f4f4f4;transform:scaleX(0.9);transform-origin:50% 50%">43</div>
<div class="t" style="left:-0.89px;top:462.21px;font-size:7.9px;line-height:9px;font-weight:700;color:#f4f4f4;transform:scaleX(0.9);transform-origin:50% 50%">44</div>
<div class="t" style="left:-0.89px;top:472.92px;font-size:7.9px;line-height:9px;font-weight:700;color:#f4f4f4;transform:scaleX(0.9);transform-origin:50% 50%">45</div>
<div class="t" style="left:-0.89px;top:483.62px;font-size:7.9px;line-height:9px;font-weight:700;color:#f4f4f4;transform:scaleX(0.9);transform-origin:50% 50%">46</div>
<div class="t" style="left:-0.89px;top:494.33px;font-size:7.9px;line-height:9px;font-weight:700;color:#f4f4f4;transform:scaleX(0.9);transform-origin:50% 50%">47</div>
<div class="t" style="left:-0.89px;top:505.03px;font-size:7.9px;line-height:9px;font-weight:700;color:#f4f4f4;transform:scaleX(0.9);transform-origin:50% 50%">48</div>
<div class="t" style="left:-0.89px;top:515.74px;font-size:7.9px;line-height:9px;font-weight:700;color:#f4f4f4;transform:scaleX(0.9);transform-origin:50% 50%">49</div>
<div class="t" style="left:-0.89px;top:526.45px;font-size:7.9px;line-height:9px;font-weight:700;color:#f4f4f4;transform:scaleX(0.9);transform-origin:50% 50%">50</div>
<div class="t" style="left:-0.89px;top:537.15px;font-size:7.9px;line-height:9px;font-weight:700;color:#f4f4f4;transform:scaleX(0.9);transform-origin:50% 50%">51</div>
<div class="t" style="left:-0.89px;top:547.86px;font-size:7.9px;line-height:9px;font-weight:700;color:#f4f4f4;transform:scaleX(0.9);transform-origin:50% 50%">52</div>
</div>
<div class="r" style="left:11px;top:112px;width:44.5px;height:12px;box-sizing:border-box;border:1.5px solid #46725f;background:#f4fffb"></div>
<div class="r" style="left:52.7px;top:122px;width:3px;height:3px;background:#2f5e4a;outline:0.5px solid #fff"></div>
<svg class="r" style="left:4px;top:674px" width="26" height="12" viewBox="0 0 26 12"><path d="M7.3 3 V9.6 L2 6.3Z M17.1 3 V9.6 L22.6 6.3Z" fill="#4c4c4c"/></svg>
<div class="r" style="left:37px;top:671px;width:52.2px;height:14.6px;background:#ffffff;border-radius:0 0 2px 2px"></div>
<div class="t" style="left:50.05px;top:674.60px;font-size:8.2px;line-height:10.2px;font-weight:700;color:#3b8c66;letter-spacing:-0.278px;">Sheet1</div>
<svg class="r" style="left:96px;top:674px" width="11" height="11" viewBox="0 0 11 11"><path d="M5.5 1.5 V9.5 M1.5 5.5 H9.5" stroke="#d8d8d8" stroke-width="1.3"/></svg>
<div class="r" style="left:114.5px;top:674px;width:1px;height:11px;background:#444;"></div>
<div class="t" style="left:12.90px;top:691.20px;font-size:8.2px;line-height:10.2px;font-weight:400;color:#ececec;letter-spacing:-0.351px;-webkit-text-stroke:0.3px currentColor;">Ready</div>
<div class="r" style="left:1067.5px;top:688.3px;width:23.5px;height:15px;background:#4d4d4d;"></div>
<svg class="r" style="left:1073.7px;top:690.5px" width="11" height="11" viewBox="0 0 11 11"><rect x="1" y="1" width="9" height="9" fill="none" stroke="#e8e8e8" stroke-width="1"/><path d="M1 4 H10 M1 7 H10 M4 1 V10 M7 1 V10" stroke="#e8e8e8" stroke-width="1"/></svg>
<svg class="r" style="left:1097.7px;top:690.5px" width="11" height="11" viewBox="0 0 11 11"><rect x="1" y="1" width="9" height="9" fill="none" stroke="#cfcfcf" stroke-width="1"/><rect x="3" y="3" width="5" height="5" fill="#9a9a9a"/></svg>
<svg class="r" style="left:1121.7px;top:690.5px" width="11" height="11" viewBox="0 0 11 11"><path d="M1 1 H3.5 V6 H7.5 V1 H10 V10 H1Z" fill="none" stroke="#d8d8d8" stroke-width="1.1"/></svg>
<div class="r" style="left:1145px;top:695.2px;width:5px;height:1.5px;background:#e0e0e0;"></div>
<div class="r" style="left:1155px;top:695.3px;width:66px;height:1.5px;background:#8a8a8a;border-radius:1px"></div>
<div class="r" style="left:1183px;top:691px;width:10px;height:10px;background:#b9b9b9;border-radius:50%"></div>
<svg class="r" style="left:1224.8px;top:692px" width="8" height="8" viewBox="0 0 8 8"><path d="M4 1 V7 M1 4 H7" stroke="#e8e8e8" stroke-width="1.4"/></svg>
<div class="t" style="left:1243.00px;top:691.20px;font-size:8.2px;line-height:10.2px;font-weight:400;color:#ececec;letter-spacing:0.009px;-webkit-text-stroke:0.3px currentColor;">100%</div>
<div class="r" style="left:445.4px;top:100.5px;width:388.9px;height:298px;background:#292929;border-radius:7px;box-shadow:0 9px 22px rgba(0,0,0,0.55),0 0 3px rgba(0,0,0,0.55);overflow:hidden"><div style="position:absolute;left:0;top:0;width:100%;height:18.5px;background:#373737;border-bottom:1px solid #1c1c1c"></div></div>
<div class="t" style="left:571.40px;top:104.40px;font-size:9px;line-height:11px;font-weight:700;color:#b4b4b4;letter-spacing:0.091px;">Text Import Wizard - Step 3 of 3</div>
<div class="t" style="left:459.00px;top:136.80px;font-size:9px;line-height:11px;font-weight:700;color:#f4f4f4;letter-spacing:-0.005px;">This screen lets you select each column and set the Data Format.</div>
<div class="t" style="left:459.00px;top:157.30px;font-size:9px;line-height:11px;font-weight:400;color:#e6e6e6;letter-spacing:-0.002px;-webkit-text-stroke:0.25px currentColor;">Column data format</div>
<svg class="r" style="left:458px;top:176px" width="10" height="10" viewBox="0 0 10 10"><defs><linearGradient id="rg" x1="0" y1="0" x2="0" y2="1"><stop offset="0" stop-color="#3aa06c"/><stop offset="1" stop-color="#2a8656"/></linearGradient></defs><circle cx="5" cy="4.7" r="4.5" fill="url(#rg)"/><circle cx="5" cy="4.7" r="1.7" fill="#fff"/></svg>
<div class="r" style="left:458.5px;top:190.5px;width:9px;height:9px;border-radius:50%;background:#545454"></div>
<div class="r" style="left:458.5px;top:204.5px;width:9px;height:9px;border-radius:50%;background:#545454"></div>
<div class="r" style="left:458.5px;top:219.7px;width:9px;height:9px;border-radius:50%;background:#545454"></div>
<div class="t" style="left:472.00px;top:176.00px;font-size:9px;line-height:11px;font-weight:400;color:#e6e6e6;letter-spacing:-0.170px;-webkit-text-stroke:0.25px currentColor;">General</div>
<div class="t" style="left:472.00px;top:189.90px;font-size:9px;line-height:11px;font-weight:400;color:#e6e6e6;letter-spacing:-0.069px;-webkit-text-stroke:0.25px currentColor;">Text</div>
<div class="t" style="left:472.00px;top:203.70px;font-size:9px;line-height:11px;font-weight:400;color:#e6e6e6;letter-spacing:-0.028px;-webkit-text-stroke:0.25px currentColor;">Date:</div>
<div class="t" style="left:472.00px;top:219.20px;font-size:9px;line-height:11px;font-weight:400;color:#e6e6e6;letter-spacing:0.095px;-webkit-text-stroke:0.25px currentColor;">Do not import column (Skip)</div>
<div class="r" style="left:502.2px;top:202.7px;width:40.8px;height:12.3px;background:#656565;border-radius:3px"></div>
<div class="r" style="left:531px;top:202.7px;width:12px;height:12.3px;background:#2f8f5c;border-radius:3px"></div>
<svg class="r" style="left:531px;top:202.7px" width="12" height="12.3" viewBox="0 0 12 12.3"><path d="M3.6 5 L6 2.6 L8.4 5 M3.6 7.4 L6 9.8 L8.4 7.4" stroke="#fff" stroke-width="1.2" fill="none"/></svg>
<div class="t" style="left:507.70px;top:203.40px;font-size:9px;line-height:11px;font-weight:400;color:#f2f2f2;letter-spacing:-0.950px;-webkit-text-stroke:0.25px currentColor;">DMY</div>
<div class="r" style="left:450.3px;top:163.3px;width:72.8px;height:28.8px;box-sizing:border-box;border:6px solid #e9260f;border-radius:2.5px"></div>
<div class="r" style="left:759.5px;top:234.3px;width:61.5px;height:13px;background:#646464;border-radius:3px"></div>
<div class="t" style="left:766.30px;top:235.70px;font-size:9px;line-height:11px;font-weight:400;color:#f4f4f4;letter-spacing:-0.003px;-webkit-text-stroke:0.25px currentColor;">Advanced...</div>
<div class="t" style="left:459.00px;top:262.70px;font-size:9px;line-height:11px;font-weight:400;color:#e6e6e6;letter-spacing:0.060px;-webkit-text-stroke:0.25px currentColor;">Preview of selected data<span>:</span></div>
<div class="r" style="left:604px;top:371.5px;width:48.200000000000045px;height:13px;background:#666666;border-radius:3px"></div>
<div class="t" style="left:614.30px;top:373.00px;font-size:9px;line-height:11px;font-weight:400;color:#f6f6f6;letter-spacing:-0.023px;-webkit-text-stroke:0.35px currentColor;">Cancel</div>
<div class="r" style="left:660.3px;top:371.5px;width:48.10000000000002px;height:13px;background:#666666;border-radius:3px"></div>
<div class="t" style="left:670.30px;top:373.00px;font-size:9px;line-height:11px;font-weight:400;color:#f6f6f6;letter-spacing:-0.013px;-webkit-text-stroke:0.35px currentColor;">&lt; Back</div>
<div class="r" style="left:716.5px;top:371.5px;width:48.39999999999998px;height:13px;background:#474747;border-radius:3px"></div>
<div class="t" style="left:727.30px;top:373.00px;font-size:9px;line-height:11px;font-weight:400;color:#7c7c7c;letter-spacing:0.088px;-webkit-text-stroke:0.35px currentColor;">Next &gt;</div>
<div class="r" style="left:773px;top:371.5px;width:48px;height:13px;background:#1f7d47;border-radius:3px"></div>
<div class="t" style="left:784.70px;top:373.00px;font-size:9px;line-height:11px;font-weight:400;color:#ffffff;letter-spacing:-0.142px;-webkit-text-stroke:0.35px currentColor;">Finish</div>
<div class="r" style="left:458.8px;top:278.8px;width:361.5px;height:86.3px;background:#fff;overflow:hidden">
<div class="r" style="left:0;top:15.6px;width:69.25px;height:80px;background:#000"></div>
<svg class="r" style="left:0;top:0" width="361.5" height="86.3"><path d="M0 7.45 H361.5" stroke="#1a1a1a" stroke-width="0.9"/><path d="M0 15.45 H361.5" stroke="#000" stroke-width="1.3"/>
<path d="M70.65 7.4 V86.3M157.75 7.4 V86.3M214.70 7.4 V86.3M278.35 7.4 V86.3M338.65 7.4 V86.3" stroke="#111" stroke-width="0.9" fill="none"/></svg>
<div style="position:absolute;left:0.60px;top:8px;height:6.9px;width:40px;overflow:hidden"><div style="font-family:'Liberation Mono',monospace;font-size:5.583px;line-height:5.654px;white-space:pre;position:absolute;transform:scaleY(1.3);transform-origin:0 0;left:0;top:1.6px;color:#111;text-decoration:underline">General</div></div>
<div style="font-family:'Liberation Mono',monospace;font-size:5.583px;line-height:5.654px;white-space:pre;position:absolute;transform:scaleY(1.3);transform-origin:0 0;left:0.60px;top:16.8px;color:#fff;font-weight:700">Name
Billboard
Printing of booklets
Fabric banner
Flags with logo
Pens with logo
Billboard</div>
<div style="position:absolute;left:70.95px;top:8px;height:6.9px;width:40px;overflow:hidden"><div style="font-family:'Liberation Mono',monospace;font-size:5.583px;line-height:5.654px;white-space:pre;position:absolute;transform:scaleY(1.3);transform-origin:0 0;left:0;top:1.6px;color:#111;text-decoration:underline">General</div></div>
<div style="font-family:'Liberation Mono',monospace;font-size:5.583px;line-height:5.654px;white-space:pre;position:absolute;transform:scaleY(1.3);transform-origin:0 0;left:70.95px;top:16.8px;color:#222;font-weight:400">Description
Prepare the layout
Prepare options to choose
The size of the banner
Prepare the layout
Layout with logo for
Prepare the layout</div>
<div style="position:absolute;left:158.05px;top:8px;height:6.9px;width:40px;overflow:hidden"><div style="font-family:'Liberation Mono',monospace;font-size:5.583px;line-height:5.654px;white-space:pre;position:absolute;transform:scaleY(1.3);transform-origin:0 0;left:0;top:1.6px;color:#111;text-decoration:underline">General</div></div>
<div style="font-family:'Liberation Mono',monospace;font-size:5.583px;line-height:5.654px;white-space:pre;position:absolute;transform:scaleY(1.3);transform-origin:0 0;left:158.05px;top:16.8px;color:#222;font-weight:400">Status
Done
Stopped
In progress
Scheduled
Ready for review
Not scheduled</div>
<div style="position:absolute;left:215.00px;top:8px;height:6.9px;width:40px;overflow:hidden"><div style="font-family:'Liberation Mono',monospace;font-size:5.583px;line-height:5.654px;white-space:pre;position:absolute;transform:scaleY(1.3);transform-origin:0 0;left:0;top:1.6px;color:#111;text-decoration:underline">General</div></div>
<div style="font-family:'Liberation Mono',monospace;font-size:5.583px;line-height:5.654px;white-space:pre;position:absolute;transform:scaleY(1.3);transform-origin:0 0;left:215.00px;top:16.8px;color:#222;font-weight:400">Deadline
30/11/2022 1:00:00
10.07.2023 09:00
11/07/2023 3:00
12.07.2023 12:00

</div>
<div style="position:absolute;left:278.65px;top:8px;height:6.9px;width:40px;overflow:hidden"><div style="font-family:'Liberation Mono',monospace;font-size:5.583px;line-height:5.654px;white-space:pre;position:absolute;transform:scaleY(1.3);transform-origin:0 0;left:0;top:1.6px;color:#111;text-decoration:underline">General</div></div>
<div style="font-family:'Liberation Mono',monospace;font-size:5.583px;line-height:5.654px;white-space:pre;position:absolute;transform:scaleY(1.3);transform-origin:0 0;left:278.65px;top:16.8px;color:#222;font-weight:400">Task creator
Grigory Skovoroda
Grigory Skovoroda
Grigory Skovoroda
Grigory Skovoroda
Grigory Skovoroda
Grigory Skovoroda</div>
<div style="position:absolute;left:338.95px;top:8px;height:6.9px;width:40px;overflow:hidden"><div style="font-family:'Liberation Mono',monospace;font-size:5.583px;line-height:5.654px;white-space:pre;position:absolute;transform:scaleY(1.3);transform-origin:0 0;left:0;top:1.6px;color:#111;text-decoration:underline">General</div></div>
<div style="font-family:'Liberation Mono',monospace;font-size:5.583px;line-height:5.654px;white-space:pre;position:absolute;transform:scaleY(1.3);transform-origin:0 0;left:338.95px;top:16.8px;color:#222;font-weight:400">Person in
Maria Prymachenko
Maria Prymachenko
Kateryna Bilokur
Maria Prymachenko
Kateryna Bilokur
Maria Prymachenko</div>
</div>
<svg class="r" style="left:10px;top:36px" width="20" height="23" viewBox="0 0 20 23">
<path d="M2 2 H10 L15 7 V19.6 H2Z" fill="#dcdcdc"/>
<path d="M10 2 V7 H15Z" fill="#f2f2f2"/>
<path d="M3.3 4.5H9 M3.3 6.5H9 M3.3 8.5H13.5 M3.3 10.5H13.5 M3.3 12.5H10 M3.3 14.5H10 M3.3 16.5H10" stroke="#a8a8a8" stroke-width="0.8"/>
<path d="M10.4 12 V19.3 A3.75 1.5 0 0 0 17.9 19.3 V12Z" fill="#dfae2c"/>
<ellipse cx="14.15" cy="12" rx="3.75" ry="1.4" fill="#f0c95a"/>
</svg>
<svg class="r" style="left:55px;top:36px" width="24" height="22" viewBox="0 0 24 22">
<path d="M7 2 H15.5 L21.7 8 V19.9 H7Z" fill="#d2d5d2"/>
<path d="M15.5 2 V8 H21.7Z" fill="#e9ebe9"/>
<path d="M3.5 9.5 A5 5 0 0 1 11 7.2" fill="none" stroke="#2f6b3c" stroke-width="2.2"/>
<path d="M9.3 4.8 L13.6 6.2 L10.3 9.6Z" fill="#2f6b3c"/>
<path d="M12.3 13 A5 5 0 0 1 4.6 15.2" fill="none" stroke="#2f6b3c" stroke-width="2.2"/>
<path d="M6.2 17.8 L2 16.2 L5.4 12.9Z" fill="#2f6b3c"/>
</svg>
<svg class="r" style="left:95px;top:34.5px" width="10" height="9.5" viewBox="0 0 10 9.5">
<rect x="0" y="0" width="10" height="9.2" rx="0.8" fill="#c9d6e2"/>
<path d="M5 1.6 V4 M2.6 6.6 V4.6 H7.4 V6.6" stroke="#3d6ea5" stroke-width="0.9" fill="none"/>
<rect x="3.9" y="0.9" width="2.2" height="1.8" fill="#3d6ea5"/><rect x="1.5" y="6" width="2.2" height="1.8" fill="#3d6ea5"/><rect x="6.3" y="6" width="2.2" height="1.8" fill="#3d6ea5"/>
</svg>
<svg class="r" style="left:96px;top:50.5px" width="8" height="9" viewBox="0 0 8 9"><rect x="0" y="0" width="8" height="9" fill="#676767"/><path d="M1 2.5H7 M1 4.7H7 M1 6.9H7" stroke="#585858" stroke-width="0.9"/></svg>
<svg class="r" style="left:95.5px;top:66px" width="10" height="9" viewBox="0 0 10 9"><path d="M0.5 1 H3.5 L4.5 2.5 H7.5 V7.5 H0.5Z" fill="#5c6068"/><rect x="3.5" y="3.5" width="5.5" height="4.5" fill="#62666e"/></svg>
<div class="t" style="left:171px;top:38.6px;font-size:6.2px;line-height:6px;font-weight:700;color:#33518a">A</div>
<div class="t" style="left:171px;top:44.6px;font-size:6.2px;line-height:6px;font-weight:700;color:#5a5a5a">Z</div>
<div class="t" style="left:171px;top:58.8px;font-size:6.2px;line-height:6px;font-weight:700;color:#5a5a5a">Z</div>
<div class="t" style="left:171px;top:64.8px;font-size:6.2px;line-height:6px;font-weight:700;color:#2f4a86">A</div>
<svg class="r" style="left:177.5px;top:39.5px" width="5" height="9" viewBox="0 0 5 9"><path d="M2.5 0.5 V5.5" stroke="#e6e6e6" stroke-width="1.6"/><path d="M0.3 4.6 H4.7 L2.5 8.2Z" fill="#e6e6e6"/></svg>
<svg class="r" style="left:177.5px;top:60.8px" width="5" height="9" viewBox="0 0 5 9"><path d="M2.5 0.5 V5.5" stroke="#e6e6e6" stroke-width="1.6"/><path d="M0.3 4.6 H4.7 L2.5 8.2Z" fill="#e6e6e6"/></svg>
<svg class="r" style="left:191px;top:37px" width="20" height="20" viewBox="0 0 20 20">
<path d="M1.6 13.4 L6.6 1.6 L11.6 13.4 M3.6 9.2 H9.6" fill="none" stroke="#3b66ad" stroke-width="1.7"/>
<path d="M9.6 7 H17.6 L10 17.4 H18.4" fill="none" stroke="#8e8e8e" stroke-width="1.7"/>
</svg>
<svg class="r" style="left:220px;top:38px" width="20" height="19" viewBox="0 0 20 19"><path d="M1.7 3.332 L7.539999999999999 9.399999999999999 V17.599999999999998 H11.86 V9.399999999999999 L17.7 3.332Z" fill="#b9b9b9"/><ellipse cx="9.7" cy="3.332" rx="8.0" ry="2.1319999999999997" fill="#b9b9b9"/><ellipse cx="9.7" cy="3.332" rx="6.24" ry="1.1725999999999999" fill="rgba(255,255,255,0.25)"/></svg>
<svg class="r" style="left:248px;top:34px" width="14" height="12" viewBox="0 0 14 12"><path d="M1.5 2.3 L4.42 6.0 V11 H6.58 V6.0 L9.5 2.3Z" fill="#5e5e5e"/><ellipse cx="5.5" cy="2.3" rx="4.0" ry="1.3" fill="#5e5e5e"/><ellipse cx="5.5" cy="2.3" rx="3.12" ry="0.7150000000000001" fill="rgba(255,255,255,0.25)"/><path d="M9.3 7 L12.3 10.6 M12.3 7 L9.3 10.6" stroke="#7a2f33" stroke-width="1.2"/></svg>
<svg class="r" style="left:248px;top:49.5px" width="14" height="12" viewBox="0 0 14 12"><path d="M1.5 2.3 L4.42 6.0 V11 H6.58 V6.0 L9.5 2.3Z" fill="#5e5e5e"/><ellipse cx="5.5" cy="2.3" rx="4.0" ry="1.3" fill="#5e5e5e"/><ellipse cx="5.5" cy="2.3" rx="3.12" ry="0.7150000000000001" fill="rgba(255,255,255,0.25)"/></svg>
<svg class="r" style="left:248px;top:64.5px" width="14" height="12" viewBox="0 0 14 12"><path d="M1.5 2.5090000000000003 L4.566 5.95 V10.600000000000001 H6.8340000000000005 V5.95 L9.9 2.5090000000000003Z" fill="#c4c4c4"/><ellipse cx="5.7" cy="2.5090000000000003" rx="4.2" ry="1.209" fill="#c4c4c4"/><ellipse cx="5.7" cy="2.5090000000000003" rx="3.2760000000000002" ry="0.66495" fill="rgba(255,255,255,0.25)"/><path d="M8.2 9.8 L11.2 5.6 L12.6 8.6" stroke="#3f78c4" stroke-width="1.3" fill="none"/></svg>
<svg class="r" style="left:316px;top:36px" width="22" height="20" viewBox="0 0 22 20">
<rect x="1.4" y="7.7" width="8.6" height="11.3" fill="#c9c9d1"/>
<rect x="11.6" y="7.7" width="8.6" height="11.3" fill="#c6c6c6"/>
<path d="M15.9 7.7 V19 M11.6 11.4 H20.2 M11.6 15.2 H20.2" stroke="#8c8c8c" stroke-width="0.8"/>
<path d="M5.7 5.6 Q10.5 0.2 15.6 4.2" fill="none" stroke="#34679d" stroke-width="1.5"/>
<path d="M13.6 1.9 L17.2 5.4 L12.7 5.9Z" fill="#34679d"/>
</svg>
<svg class="r" style="left:347px;top:37px" width="22" height="20" viewBox="0 0 22 20">
<rect x="0.9" y="0.9" width="16" height="16" fill="#cfcfcf"/>
<rect x="4.9" y="4.9" width="8" height="8" fill="#bcd3cf"/>
<path d="M4.9 0.9 V16.9 M8.9 0.9 V16.9 M12.9 0.9 V16.9 M0.9 4.9 H16.9 M0.9 8.9 H16.9 M0.9 12.9 H16.9" stroke="#9a9a9a" stroke-width="0.7"/>
<path d="M16.5 6.5 L12.6 13 H15.6 L13.6 18.6 L20.6 10.6 H17.2 L19.6 6.5Z" fill="#d58a4e"/>
</svg>
<svg class="r" style="left:379px;top:36px" width="23" height="22" viewBox="0 0 23 22">
<rect x="1.3" y="0.7" width="7" height="5" fill="#86a8d6"/><rect x="1.3" y="5.7" width="7" height="5" fill="#d9d2a4"/>
<rect x="1.3" y="10.7" width="7" height="5.2" fill="#8fb1da"/><rect x="1.3" y="15.9" width="7" height="5.1" fill="#d6cc98"/>
<rect x="14" y="0.7" width="7.2" height="4.6" fill="#86a8d6"/><rect x="14" y="5.3" width="7.2" height="5" fill="#e0c282"/>
<rect x="14" y="10.3" width="7.2" height="9.9" fill="#d2d2d2"/><path d="M14 15.2 H21.2" stroke="#aaa" stroke-width="0.6"/>
<path d="M9 10.8 H11.4" stroke="#2f62a6" stroke-width="1.8"/><path d="M10.6 8 L13.6 10.8 L10.6 13.6Z" fill="#2f62a6"/>
</svg>
<svg class="r" style="left:417px;top:37px" width="18" height="19" viewBox="0 0 18 19">
<rect x="1" y="3" width="10" height="4.7" fill="#cacaca"/>
<rect x="1" y="12.3" width="10" height="4.7" fill="#cacaca"/>
<circle cx="13.4" cy="4.8" r="3.3" fill="#3f9a4c"/><path d="M11.7 4.9 L13 6.3 L15.2 3.4" stroke="#fff" stroke-width="1" fill="none"/>
<circle cx="13.4" cy="14.5" r="3.3" fill="#c9343f"/><circle cx="13.4" cy="14.5" r="1.9" fill="none" stroke="#fff" stroke-width="0.9"/><path d="M12 15.9 L14.8 13.1" stroke="#fff" stroke-width="0.9"/>
</svg>
<svg class="r" style="left:458px;top:38px" width="22" height="19" viewBox="0 0 22 19">
<rect x="1" y="1.5" width="6.4" height="15.9" fill="#cccccc"/>
<path d="M1 5.5 H7.4 M1 9.5 H7.4 M1 13.5 H7.4" stroke="#9d9d9d" stroke-width="0.7"/>
<path d="M7 8.5 H10" stroke="#2f62a6" stroke-width="1.8"/><path d="M9.2 5.8 L12.2 8.5 L9.2 11.2Z" fill="#2f62a6"/>
<rect x="13.3" y="6.5" width="7.3" height="6" fill="#ecd6c0" stroke="#c98b55" stroke-width="0.8"/>
</svg>
<svg class="r" style="left:503px;top:38px" width="21" height="18" viewBox="0 0 21 18">
<rect x="0.8" y="1.5" width="18.2" height="14.5" fill="#e2ccb0"/>
<path d="M0.8 5.1 H19 M0.8 8.7 H19 M0.8 12.3 H19 M5.4 1.5 V16 M10 1.5 V16" stroke="#c99b6a" stroke-width="0.7"/>
<rect x="10.4" y="1.5" width="8.6" height="14.5" fill="#b9cfe6"/>
<path d="M12.6 6.6 Q12.6 3.6 15.3 3.6 Q18 3.6 18 6.2 Q18 8 15.8 9.2 V11" fill="none" stroke="#3a71b4" stroke-width="2"/>
<circle cx="15.8" cy="13.8" r="1.2" fill="#3a71b4"/>
</svg>
<svg class="r" style="left:546px;top:38px" width="19" height="18" viewBox="0 0 19 18">
<rect x="1" y="5.4" width="7" height="7" fill="#a9c6ea"/>
<path d="M4.5 7.2 V10.6 M2.8 8.9 H6.2" stroke="#2d5a98" stroke-width="1.3"/>
<rect x="10.5" y="0.9" width="7.1" height="16.5" fill="#c9c5c1"/>
<path d="M10.5 5 H17.6 M10.5 9.1 H17.6 M10.5 13.2 H17.6" stroke="#9d9994" stroke-width="0.7"/>
</svg>
<svg class="r" style="left:581px;top:38px" width="19" height="18" viewBox="0 0 19 18">
<rect x="0.9" y="5.4" width="7.1" height="7" fill="#e4b6bd"/>
<path d="M2.2 11.2 L6.8 6.6" stroke="#b8323f" stroke-width="1.3"/>
<rect x="10.3" y="0.9" width="7.2" height="16.5" fill="#c9c5c1"/>
<path d="M10.3 5 H17.5 M10.3 9.1 H17.5 M10.3 13.2 H17.5" stroke="#9d9994" stroke-width="0.7"/>
</svg>
<svg class="r" style="left:619px;top:38px" width="18" height="19" viewBox="0 0 18 19">
<rect x="1.3" y="0.9" width="15.7" height="17.5" fill="#e3dfdb"/>
<rect x="1.3" y="14.4" width="15.7" height="4" fill="#e3b886"/>
<path d="M1.3 5.3 H17 M1.3 9.8 H17 M1.3 14.3 H17 M9 0.9 V18.4" stroke="#b5b0aa" stroke-width="0.7"/>
<path d="M3 3.1 H7 M3 7.6 H7 M3 12.1 H7" stroke="#4a4e58" stroke-width="1.3"/>
</svg>
<svg class="r" style="left:649.5px;top:42px" width="6" height="6" viewBox="0 0 6 6"><rect x="0.3" y="0.3" width="5.2" height="5" fill="#5d6e90"/><path d="M2.9 1.6 V4 M1.7 2.8 H4.1" stroke="#3a3f4c" stroke-width="0.9"/></svg>
<svg class="r" style="left:649.5px;top:62px" width="6" height="6" viewBox="0 0 6 6"><rect x="0.3" y="0.3" width="5.2" height="5" fill="#7d4b57"/><path d="M1.7 2.8 H4.1" stroke="#4a3036" stroke-width="0.9"/></svg>
<div class="r" style="left:657px;top:46.8px;width:6px;height:0.8px;background:#444;"></div>
<div class="r" style="left:657px;top:66.8px;width:6px;height:0.8px;background:#444;"></div>
<svg class="r" style="left:722px;top:36px" width="24" height="22" viewBox="0 0 24 22"><polygon points="17.66,11.98 17.66,13.42 15.18,14.15 14.81,15.06 16.04,17.33 15.03,18.34 12.76,17.11 11.85,17.48 11.12,19.96 9.68,19.96 8.95,17.48 8.04,17.11 5.77,18.34 4.76,17.33 5.99,15.06 5.62,14.15 3.14,13.42 3.14,11.98 5.62,11.25 5.99,10.34 4.76,8.07 5.77,7.06 8.04,8.29 8.95,7.92 9.68,5.44 11.12,5.44 11.85,7.92 12.76,8.29 15.03,7.06 16.04,8.07 14.81,10.34 15.18,11.25" fill="#d9622f"/><circle cx="10.4" cy="12.7" r="2.3" fill="#5a2a18"/><polygon points="21.28,5.84 21.28,6.56 19.99,6.93 19.80,7.38 20.46,8.55 19.95,9.06 18.78,8.40 18.33,8.59 17.96,9.88 17.24,9.88 16.87,8.59 16.42,8.40 15.25,9.06 14.74,8.55 15.40,7.38 15.21,6.93 13.92,6.56 13.92,5.84 15.21,5.47 15.40,5.02 14.74,3.85 15.25,3.34 16.42,4.00 16.87,3.81 17.24,2.52 17.96,2.52 18.33,3.81 18.78,4.00 19.95,3.34 20.46,3.85 19.80,5.02 19.99,5.47" fill="#a0a0a0"/><circle cx="17.6" cy="6.2" r="1.2" fill="#3a3a3a"/></svg>
</div></body></html>
